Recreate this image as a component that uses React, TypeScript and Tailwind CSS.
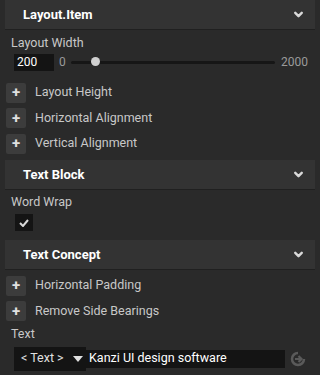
import { ChevronDown } from 'lucide-react'

function SectionHeader({ title }: { title: string }) {
  return (
    <div className="mx-[5px] flex h-[30px] items-center justify-between border-b border-[#202020] bg-[#333333] pl-[18px] pr-[10px]">
      <span className="text-[13px] font-bold text-white">{title}</span>
      <ChevronDown className="h-[13px] w-[13px] text-[#d8d8d8]" strokeWidth={4.5} />
    </div>
  )
}

function AddRow({ label }: { label: string }) {
  return (
    <div className="flex h-[25.5px] items-center gap-[9px] pl-[6px]">
      <div className="flex h-[20px] w-[20px] items-center justify-center rounded-[2px] bg-[#3c3c3c] text-[15px] font-bold leading-none text-[#e0e0e0]">
        +
      </div>
      <span className="text-[12.5px] text-[#c8c8c8]">{label}</span>
    </div>
  )
}

export default function App() {
  return (
    <div
      className="h-[375px] w-[320px] overflow-hidden bg-[#2a2a2a]"
      style={{ fontFamily: 'Roboto, "Open Sans", sans-serif' }}
    >
      <SectionHeader title="Layout.Item" />

      <div className="pl-[11px] pt-[4px] text-[12.5px] text-[#c8c8c8]">Layout Width</div>
      <div className="mt-[1px] flex h-[17px] items-center pl-[14px] pr-[12px]">
        <div className="flex h-[17px] w-[40px] items-center bg-[#141414] pl-[3px] text-[12px] text-white">200</div>
        <span className="ml-[5px] text-[12px] text-[#9a9a9a]">0</span>
        <div className="relative ml-[5px] h-[3px] flex-1 rounded-full bg-[#161616]">
          <div className="absolute left-[20px] top-[-3.5px] h-[9px] w-[9px] rounded-full bg-[#d0d0d0]" />
        </div>
        <span className="ml-[6px] text-[12px] text-[#9a9a9a]">2000</span>
      </div>

      <div className="mt-[9px]">
        <AddRow label="Layout Height" />
        <AddRow label="Horizontal Alignment" />
        <AddRow label="Vertical Alignment" />
      </div>

      <div className="mt-[4px]">
        <SectionHeader title="Text Block" />
      </div>
      <div className="pl-[11px] pt-[3px] text-[12.5px] text-[#c8c8c8]">Word Wrap</div>
      <div className="ml-[15px] mt-[2px] flex h-[17px] w-[18px] items-center justify-center bg-[#141414]">
        <svg width="10" height="8" viewBox="0 0 10 8">
          <path d="M1 4 L4 7 L9 1" stroke="#d8d8d8" strokeWidth="2" fill="none" />
        </svg>
      </div>

      <div className="mt-[9px]">
        <SectionHeader title="Text Concept" />
      </div>
      <div className="mt-[3px]">
        <AddRow label="Horizontal Padding" />
        <AddRow label="Remove Side Bearings" />
      </div>

      <div className="pl-[11px] pt-[1px] text-[12.5px] text-[#c8c8c8]">Text</div>
      <div className="mt-[3px] flex items-center pl-[14px]">
        <div className="flex h-[24px] w-[72px] items-center bg-[#141414] pl-[7px] text-[12.5px] text-[#e0e0e0]">
          <span>&lt; Text &gt;</span>
          <svg className="ml-[9px]" width="10" height="6" viewBox="0 0 10 6">
            <path d="M0 0 L10 0 L5 6 Z" fill="#e0e0e0" />
          </svg>
        </div>
        <div className="flex h-[18px] w-[199px] items-center bg-[#141414] pl-[3px] text-[12.5px] text-white">
          Kanzi UI design software
        </div>
        <svg className="ml-[5px]" width="16" height="16" viewBox="0 0 16 16">
          <path d="M8 2 A6 6 0 1 0 14 8" stroke="#5a5a5a" strokeWidth="2.5" fill="none" />
          <path d="M5 8 L11 8 M8.5 5 L11.5 8 L8.5 11" stroke="#5a5a5a" strokeWidth="2.2" fill="none" />
        </svg>
      </div>
    </div>
  )
}
